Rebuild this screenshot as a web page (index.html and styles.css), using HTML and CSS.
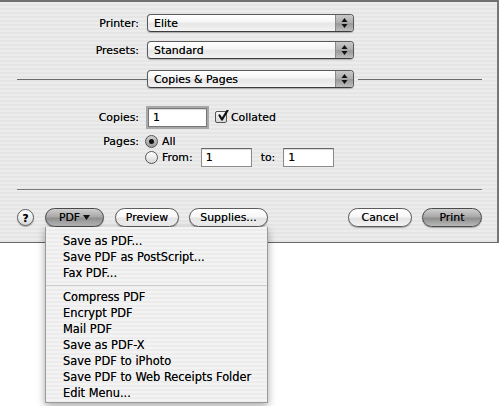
FILE: index.html
```html
<!DOCTYPE html>
<html>
<head>
<meta charset="utf-8">
<link rel="stylesheet" href="styles.css">
</head>
<body>
<div class="page">
  <div class="dialog">
    <div class="row r-printer">
      <span class="label">Printer:</span>
      <div class="popup"><span class="popup-text">Elite</span><span class="popup-arrows"><svg width="7" height="12" viewBox="0 0 7 12"><path d="M3.5 1 L6.5 5 L0.5 5 Z M3.5 11 L6.5 7 L0.5 7 Z" fill="#111"/></svg></span></div>
    </div>
    <div class="row r-presets">
      <span class="label">Presets:</span>
      <div class="popup"><span class="popup-text">Standard</span><span class="popup-arrows"><svg width="7" height="12" viewBox="0 0 7 12"><path d="M3.5 1 L6.5 5 L0.5 5 Z M3.5 11 L6.5 7 L0.5 7 Z" fill="#111"/></svg></span></div>
    </div>
    <div class="row r-pane">
      <span class="rule-left"></span>
      <div class="popup"><span class="popup-text">Copies &amp; Pages</span><span class="popup-arrows"><svg width="7" height="12" viewBox="0 0 7 12"><path d="M3.5 1 L6.5 5 L0.5 5 Z M3.5 11 L6.5 7 L0.5 7 Z" fill="#111"/></svg></span></div>
      <span class="rule-right"></span>
    </div>
    <div class="row r-copies">
      <span class="label">Copies:</span>
      <div class="field field-copies focus">1</div>
      <span class="checkbox"><svg width="12" height="12" viewBox="0 0 12 12"><path d="M2.5 5.5 L5 9.5 L10.5 0.5" fill="none" stroke="#111" stroke-width="2.2" stroke-linecap="round" stroke-linejoin="round"/></svg></span>
      <span class="check-label">Collated</span>
    </div>
    <div class="row r-pages">
      <span class="label">Pages:</span>
      <span class="radio on"><span class="dot"></span></span>
      <span class="radio-label">All</span>
    </div>
    <div class="row r-from">
      <span class="label"></span>
      <span class="radio"></span>
      <span class="radio-label">From:</span>
      <div class="field field-from">1</div>
      <span class="to-label">to:</span>
      <div class="field field-to">1</div>
    </div>
    <div class="separator"></div>
    <div class="row r-buttons">
      <span class="help">?</span>
      <span class="btn dark btn-pdf">PDF <svg width="7" height="5" viewBox="0 0 7 5"><path d="M0 0 L7 0 L3.5 5 Z" fill="#111"/></svg></span>
      <span class="btn btn-preview">Preview</span>
      <span class="btn btn-supplies">Supplies...</span>
      <span class="spacer"></span>
      <span class="btn btn-cancel">Cancel</span>
      <span class="btn dark btn-print">Print</span>
    </div>
  </div>
  <div class="menu">
    <div class="item">Save as PDF...</div>
    <div class="item">Save PDF as PostScript...</div>
    <div class="item">Fax PDF...</div>
    <div class="menu-sep"></div>
    <div class="item">Compress PDF</div>
    <div class="item">Encrypt PDF</div>
    <div class="item">Mail PDF</div>
    <div class="item">Save as PDF-X</div>
    <div class="item">Save PDF to iPhoto</div>
    <div class="item">Save PDF to Web Receipts Folder</div>
    <div class="item">Edit Menu...</div>
  </div>
</div>
</body>
</html>
```

FILE: styles.css
```css
html, body {
  margin: 0;
  padding: 0;
  background: #ffffff;
}
body {
  width: 500px;
  height: 406px;
  overflow: hidden;
  font-family: "DejaVu Sans", "Liberation Sans", sans-serif;
  font-size: 10.9px;
  color: #000;
  text-shadow: 0 0 0.5px rgba(0,0,0,0.6);
}
.page {
  position: relative;
  width: 500px;
  height: 406px;
}
.dialog {
  box-sizing: border-box;
  width: 499px;
  height: 243px;
  border-top: 2px solid #707070;
  border-right: 2px solid #777;
  border-bottom: 1px solid #666;
  background: repeating-linear-gradient(to bottom, #ececec 0, #ececec 2px, #e5e5e5 2px, #e5e5e5 4px);
  padding-top: 12px;
  display: flex;
  flex-direction: column;
}
.row {
  display: flex;
  align-items: center;
}
.label {
  width: 139px;
  text-align: right;
  flex: none;
}
.r-printer, .r-presets, .r-pane { height: 18px; }
.r-presets { margin-top: 9px; }
.r-pane { margin-top: 11px; padding: 0 15px 0 17px; }
.popup {
  box-sizing: border-box;
  margin-left: 8px;
  width: 207px;
  height: 18px;
  border: 1px solid #5a5a5a;
  border-bottom-color: #3c3c3c;
  border-radius: 4px;
  background: linear-gradient(to bottom, #ffffff 0%, #f6f6f6 40%, #e6e6e6 55%, #f3f3f3 100%);
  display: flex;
  align-items: center;
  overflow: hidden;
  box-shadow: 0 1px 1px rgba(0,0,0,0.25);
}
.popup-text {
  flex: 1;
  padding-left: 6px;
  color: #000;
}
.popup-arrows {
  width: 17px;
  height: 100%;
  display: flex;
  align-items: center;
  justify-content: center;
  background: linear-gradient(to bottom, #c8c8c8 0%, #b0b0b0 45%, #9a9a9a 55%, #bdbdbd 100%);
  border-left: 1px solid #8a8a8a;
}
.r-pane .popup { margin-left: 0; }
.rule-left {
  width: 130px;
  height: 1px;
  background: #6a6a6a;
}
.rule-right {
  flex: 1;
  height: 1px;
  margin-left: 4px;
  background: #6a6a6a;
}
.r-copies { margin-top: 19px; height: 20px; }
.field {
  box-sizing: border-box;
  background: #fff;
  border: 1px solid #8a8a8a;
  border-top-color: #666;
  box-shadow: inset 0 1px 1px rgba(0,0,0,0.15);
  display: flex;
  align-items: center;
  padding-left: 4px;
  color: #000;
}
.field-copies {
  margin-left: 9px;
  width: 59px;
  height: 19px;
}
.focus {
  border-color: #777;
  box-shadow: 0 0 0 2px #a8a8a8, inset 0 1px 1px rgba(0,0,0,0.15);
}
.checkbox {
  box-sizing: border-box;
  margin-left: 8px;
  width: 12px;
  height: 12px;
  border: 1px solid #555;
  border-radius: 2px;
  background: linear-gradient(to bottom, #f4f4f4, #d8d8d8);
  display: flex;
  position: relative;
}
.checkbox svg { position: absolute; left: 1px; top: -2px; }
.check-label { margin-left: 4px; }
.r-pages { margin-top: 7px; height: 14px; }
.radio {
  box-sizing: border-box;
  margin-left: 6px;
  width: 13px;
  height: 13px;
  border: 1px solid #555;
  border-radius: 50%;
  background: linear-gradient(to bottom, #ffffff, #d6d6d6);
  display: flex;
  align-items: center;
  justify-content: center;
  flex: none;
}
.radio.on { background: linear-gradient(to bottom, #d0d0d0, #9a9a9a); }
.dot {
  width: 5px;
  height: 5px;
  border-radius: 50%;
  background: #111;
}
.radio-label { margin-left: 4px; }
.r-from { height: 19px; }
.field-from {
  margin-left: 8px;
  width: 51px;
  height: 19px;
}
.to-label { margin-left: 9px; }
.field-to {
  margin-left: 8px;
  width: 51px;
  height: 19px;
}
.separator {
  margin: 22px 15px 0 17px;
  height: 1px;
  background: #7a7a7a;
}
.r-buttons {
  margin-top: 18px;
  height: 19px;
  padding: 0 15px 0 17px;
}
.help {
  box-sizing: border-box;
  width: 17px;
  height: 17px;
  border-radius: 50%;
  border: 1px solid #5c5c5c;
  background: linear-gradient(to bottom, #ffffff 0%, #eeeeee 50%, #d4d4d4 100%);
  display: flex;
  align-items: center;
  justify-content: center;
  font-weight: bold;
  font-size: 10.5px;
  box-shadow: 0 1px 1px rgba(0,0,0,0.3);
}
.btn {
  box-sizing: border-box;
  height: 19px;
  border: 1px solid #5c5c5c;
  border-radius: 10px;
  background: linear-gradient(to bottom, #ffffff 0%, #f7f7f7 45%, #e4e4e4 55%, #f2f2f2 100%);
  display: flex;
  align-items: center;
  justify-content: center;
  gap: 3px;
  box-shadow: 0 1px 1px rgba(0,0,0,0.3);
  color: #000;
}
.btn.dark {
  background: linear-gradient(to bottom, #cfcfcf 0%, #a9a9a9 45%, #8f8f8f 55%, #b9b9b9 100%);
  border-color: #4a4a4a;
}
.btn-pdf { margin-left: 11px; width: 59px; }
.btn-preview { margin-left: 11px; width: 64px; }
.btn-supplies { margin-left: 10px; width: 79px; }
.spacer { flex: 1; }
.btn-cancel { width: 64px; }
.btn-print { margin-left: 10px; width: 60px; }
.menu {
  position: absolute;
  left: 45px;
  top: 227px;
  width: 223px;
  box-sizing: border-box;
  border: 1px solid #9a9a9a;
  border-top: none;
  padding: 6px 0 1px 0;
  background: repeating-linear-gradient(to bottom, #f3f3f3 0, #f3f3f3 2px, #ececec 2px, #ececec 4px);
  box-shadow: 0 3px 8px rgba(0,0,0,0.35);
  font-size: 11.4px;
}
.item {
  height: 16px;
  line-height: 16px;
  padding-left: 17px;
  color: #000;
  white-space: nowrap;
}
.menu-sep {
  height: 8px;
  display: flex;
  align-items: center;
}
.menu-sep::before {
  content: "";
  flex: 1;
  height: 1px;
  background: #cfcfcf;
}
```
